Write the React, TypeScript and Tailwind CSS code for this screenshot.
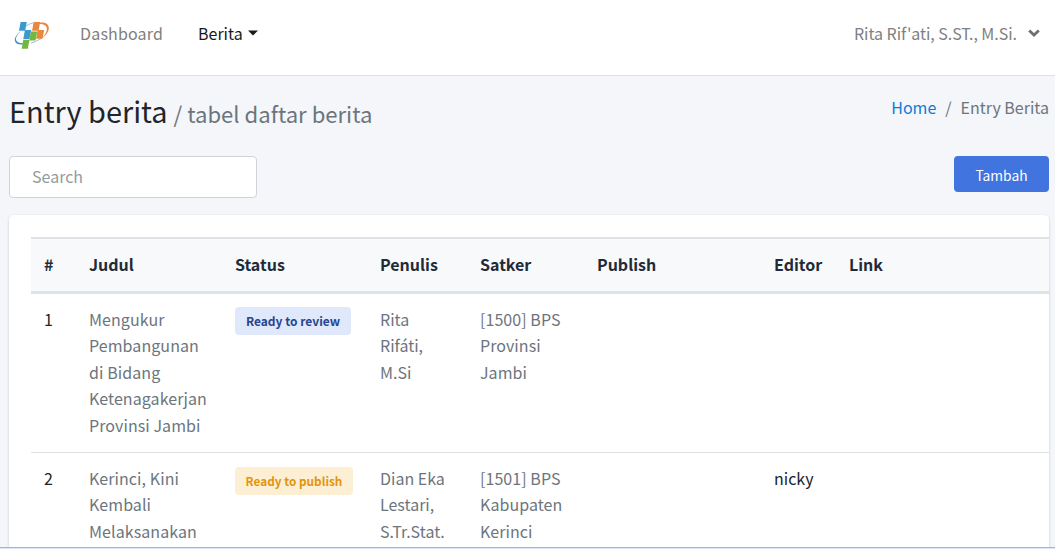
import React from 'react';

type Row = {
  no: number;
  title: string[];
  status: string;
  tone: 'blue' | 'amber';
  author: string[];
  unit: string[];
  editor?: string;
};

const rows: Row[] = [
  {
    no: 1,
    title: ['Mengukur', 'Pembangunan', 'di Bidang', 'Ketenagakerjan', 'Provinsi Jambi'],
    status: 'Ready to review',
    tone: 'blue',
    author: ['Rita', 'Rifáti,', 'M.Si'],
    unit: ['[1500] BPS', 'Provinsi', 'Jambi'],
  },
  {
    no: 2,
    title: ['Kerinci, Kini', 'Kembali', 'Melaksanakan'],
    status: 'Ready to publish',
    tone: 'amber',
    author: ['Dian Eka', 'Lestari,', 'S.Tr.Stat.'],
    unit: ['[1501] BPS', 'Kabupaten', 'Kerinci'],
    editor: 'nicky',
  },
];

const tones = {
  blue: 'w-[116px] text-[12px] bg-[#e0e9fc] text-[#274690]',
  amber: 'mt-px w-[118px] text-[11.8px] bg-[#fdefd4] text-[#e2950f]',
};

const headings = ['#', 'Judul', 'Status', 'Penulis', 'Satker', 'Publish', 'Editor', 'Link'];

function Logo() {
  return (
    <svg className="block h-[30px] w-[36px]" viewBox="0 0 36 30">
      <path d="M24 4C30 2.500 34.500 4.500 34.800 8.700c.2 3.800-3 8-7.300 10.800 3.500-3.200 5.600-6.700 5.400-9.700C32.600 6.200 29 4.700 24 5.200Z" fill="#e8883f" />
      <path d="M7 12.200C3 15.600 1.400 18.900 2.200 21.300c1.200 3.300 7 3.900 13.500 1.900C9.400 26.600 1.900 26.500.9 22 .2 18.700 2.800 14.900 7 12.200Z" fill="#3d97cc" />
      <path d="M12 7c2-1.300 4.500-2.500 7-3.200M17 24c4.300-1 8.500-3.200 11.500-5.500" fill="none" stroke="#8db9cf" strokeWidth=".9" />
      <path d="M6.600 3h6.200l-1.700 8.700H5Z" fill="#3b99d0" />
      <path d="M10.900 11h6.300l-1.700 9H9.300Z" fill="#3b99d0" />
      <path d="M19.600 3h6.500l-1.500 8.700h-6.500Z" fill="#e8883f" />
      <path d="M23.700 11h6.400l-1.600 8.700h-6.400Z" fill="#e8883f" />
      <path d="M17 12.500h6.200l-1.700 9h-6.200Z" fill="#72b73f" />
      <path d="M9.300 20.800h6.200l-1.700 9H7.600Z" fill="#72b73f" />
    </svg>
  );
}

function Lines({ items }: { items: string[] }) {
  return (
    <>
      {items.map((t) => (
        <div key={t} className="whitespace-nowrap">{t}</div>
      ))}
    </>
  );
}

export default function App() {
  return (
    <div className="flex h-[549px] w-[1055px] flex-col overflow-hidden bg-[#f4f6fa] font-['Noto_Sans_CJK_SC','Noto_Sans',sans-serif] text-[16px] leading-[26.4px] text-[#6c757d]">
      <header className="flex h-[76px] shrink-0 items-center border-b border-[#dee2e6] bg-white pb-[8px] pr-[15px] pl-[14px]">
        <Logo />
        <nav className="ml-[30px] flex items-center pb-px">
          <a className="w-[118px] tracking-[0.18px] text-[#808080]">Dashboard</a>
          <a className="flex items-center text-[#1a1a1a]">
            Berita
            <svg className="ml-[5px] h-[6px] w-[10px]" viewBox="0 0 10 6"><path d="M0 .5h10L5 5.500Z" fill="currentColor" /></svg>
          </a>
        </nav>
        <div className="ml-auto flex items-center pb-px tracking-[-0.04px] text-[#808080]">
          Rita Rif'ati, S.ST., M.Si.
          <svg className="ml-[11px] h-[8px] w-[12px]" viewBox="0 0 12 8"><path d="M1.200 1.500 6 6l4.800-4.500" fill="none" stroke="#707070" strokeWidth="2.800" /></svg>
        </div>
      </header>

      <main className="flex min-h-0 flex-1 flex-col pr-[6px] pl-[9px]">
        <div className="flex h-[80px] shrink-0 items-start justify-between">
          <h1 className="pt-[14px] text-[28.900px] leading-[40px] whitespace-nowrap text-[#212529]">
            Entry berita<small className="ml-[6px] text-[22.100px] text-[#6c757d]">/ tabel daftar berita</small>
          </h1>
          <nav className="flex pt-[18px]">
            <a className="text-[#0d7bd8]">Home</a>
            <span className="px-[9px]">/</span>
            <span>Entry Berita</span>
          </nav>
        </div>
        <div className="flex h-[59px] shrink-0 items-start justify-between">
          <input
            placeholder="Search"
            className="h-[42px] w-[248px] rounded-[4px] border border-[#ced4da] bg-white px-[22px] pb-[2px] placeholder:text-[#939ba2]"
          />
          <button className="h-[36px] w-[95px] rounded-[4px] bg-[#4274e0] pt-px text-[13.800px] leading-[20px] text-white">Tambah</button>
        </div>

        <section className="min-h-0 flex-1 overflow-hidden rounded-t-[5px] bg-white pt-[22px] pl-[22px] shadow-[0_1px_3px_rgba(30,40,60,0.2)]">
          <table className="w-[1018px] table-fixed border-separate border-spacing-0 text-left">
            <colgroup>
              <col className="w-[45px]" />
              <col className="w-[146px]" />
              <col className="w-[145px]" />
              <col className="w-[100px]" />
              <col className="w-[117px]" />
              <col className="w-[177px]" />
              <col className="w-[75px]" />
              <col className="w-[213px]" />
            </colgroup>
            <thead>
              <tr className="h-[57px] bg-[#f8f9fb] text-[#212b38]">
                {headings.map((h) => (
                  <th key={h} className="border-t-2 border-b-3 border-[#dee2e6] p-0 pb-[2px] pl-[13px] font-bold">{h}</th>
                ))}
              </tr>
            </thead>
            <tbody>
              {rows.map((r) => (
                <tr key={r.no} className="align-top [&>td]:border-b [&>td]:border-[#dee2e6] [&>td]:pt-[12px] [&>td]:pb-[14px] [&>td]:pl-[13px]">
                  <td className="text-[#212529]">{r.no}</td>
                  <td className="tracking-[0.08px]"><Lines items={r.title} /></td>
                  <td>
                    <div className="pt-px">
                      <span className={`flex h-[28px] items-center justify-center rounded-[4px] pt-px font-bold whitespace-nowrap ${tones[r.tone]}`}>
                        {r.status}
                      </span>
                    </div>
                  </td>
                  <td><Lines items={r.author} /></td>
                  <td className="tracking-[0.06px]"><Lines items={r.unit} /></td>
                  <td />
                  <td className="text-[#212529]">{r.editor}</td>
                  <td />
                </tr>
              ))}
            </tbody>
          </table>
        </section>
      </main>
      <footer className="z-10 h-[2px] shrink-0 border-t border-[#a3b5d6] bg-[#dbe6f6]" />
    </div>
  );
}
